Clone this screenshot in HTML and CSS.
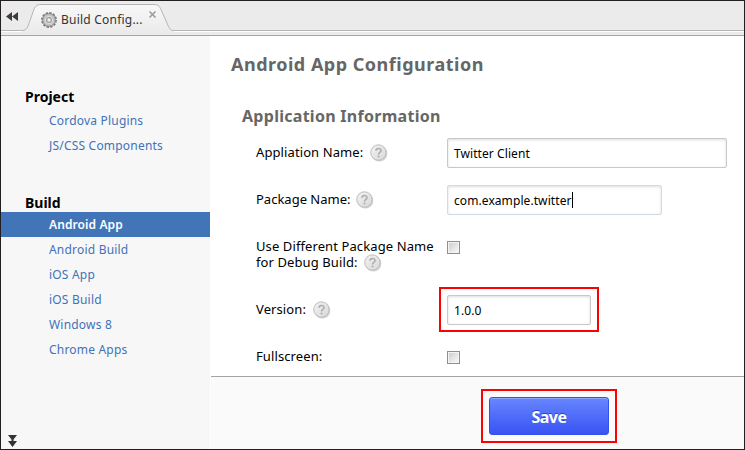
FILE: index.html
```html
<!DOCTYPE html>
<html lang="en">
<head>
<meta charset="utf-8">
<title>Android App Configuration</title>
<link rel="stylesheet" href="styles.css">
</head>
<body>
<svg class="defs" width="0" height="0" aria-hidden="true">
  <defs>
    <linearGradient id="disc" x1="0" y1="0" x2="1" y2="1"><stop offset="0" stop-color="#f3f3f3"/><stop offset="1" stop-color="#d8d8d8"/></linearGradient>
    <symbol id="help" viewBox="0 0 18 18">
      <circle cx="9.4" cy="9.7" r="7.9" fill="#d2d2d2"/>
      <circle cx="8.4" cy="8.5" r="7.7" fill="url(#disc)" stroke="#bdbdbd"/>
      <path d="M6 6.8C6 3.6 11.1 3.7 11 6.7C10.9 8.5 8.6 8.5 8.5 10.5" fill="none" stroke="#adadad" stroke-width="1.6"/>
      <circle cx="8.5" cy="12.6" r="1" fill="#adadad"/>
    </symbol>
  </defs>
</svg>
<div class="window">
  <header class="tabs">
    <svg class="tabbar" width="743" height="35" viewBox="1 1 743 35">
      <defs><linearGradient id="tab" x1="0" y1="0" x2="0" y2="1"><stop offset="0" stop-color="#f8f8f8"/><stop offset="1" stop-color="#ebebeb"/></linearGradient></defs>
      <path d="M1 31.5H744" stroke="#fff"/>
      <path d="M22 32V30.500C27 30.500 28 26 29.500 22L33 12C35 6.500 36 4.500 41 4.500H154C159 4.500 160 7 162 12L167 23C169 28 170 30.500 174 30.500V32Z" fill="url(#tab)"/>
      <path d="M1 30.500H22C27 30.500 28 26 29.500 22L33 12C35 6.500 36 4.500 41 4.500H154C159 4.500 160 7 162 12L167 23C169 28 170 30.500 174 30.500H744" fill="none" stroke="#b5b5b5"/>
      <path d="M12 12V21L6 16.500ZM18 12V21L12 16.500Z" fill="#3c3c3c"/>
      <g transform="translate(49 20)">
        <circle r="6.900" fill="none" stroke="#777" stroke-width="2" stroke-dasharray="2.400 1.213"/>
        <circle r="6.300" fill="#c6c6c6" stroke="#8b8b8b"/>
        <circle r="3.700" fill="#aaa" stroke="#dedede"/>
        <circle r="2.200" fill="#f0f0f0" stroke="#888" stroke-width=".7"/>
      </g>
      <path d="M149.500 11.500L155.500 17.500M155.500 11.500L149.500 17.500" stroke="#999" stroke-width="1.500"/>
    </svg>
    <span class="tab-title">Build Config...</span>
  </header>
  <div class="body">
    <nav class="sidebar">
      <h3>Project</h3>
      <ul><li>Cordova Plugins</li><li>JS/CSS Components</li></ul>
      <h3 class="build">Build</h3>
      <ul><li class="active">Android App</li><li>Android Build</li><li>iOS App</li><li>iOS Build</li><li>Windows 8</li><li>Chrome Apps</li></ul>
      <svg class="collapse" width="9" height="12" viewBox="0 0 9 12"><path d="M0 0H9L5.500 4.500V6H9L4.500 12L0 6H3.500V4.500Z" fill="#333"/></svg>
    </nav>
    <main class="main">
      <section class="form">
        <h1>Android App Configuration</h1>
        <h2>Application Information</h2>
        <div class="rows">
          <div class="row"><div class="label"><span>Appliation Name:</span><svg class="help"><use href="#help"/></svg></div><div class="input wide">Twitter Client</div></div>
          <div class="row"><div class="label package"><span>Package Name:</span><svg class="help"><use href="#help"/></svg></div><div class="input medium focus">com.example.twitter<i class="caret"></i></div></div>
          <div class="row double"><div class="label"><span>Use Different Package Name<br>for Debug Build:</span><svg class="help"><use href="#help"/></svg></div><div class="check"></div></div>
          <div class="row"><div class="label"><span>Version:</span><svg class="help"><use href="#help"/></svg></div><div class="mark"><div class="input short">1.0.0</div></div></div>
          <div class="row"><div class="label"><span>Fullscreen:</span></div><div class="check"></div></div>
        </div>
      </section>
      <footer class="footer"><div class="mark-save"><button class="save">Save</button></div></footer>
    </main>
  </div>
</div>
</body>
</html>
```
FILE: styles.css
```css
* { box-sizing: border-box; }
body { margin: 0; font: 12px/16px "Noto Sans", sans-serif; color: #000; }
h1, h2, h3, ul { margin: 0; padding: 0; }
.defs { position: absolute; }
.window { width: 745px; height: 450px; border: 1px solid #231f20; display: flex; flex-direction: column; overflow: hidden; background: #fff; }
.tabs { position: relative; height: 35px; flex: none; background: #ebebeb; border-bottom: 1px solid #a5a5a5; overflow: hidden; }
.tabbar { display: block; }
.tab-title { position: absolute; left: 60px; top: 11px; color: #333; white-space: nowrap; letter-spacing: .22px; }
.body { display: flex; flex: 1; min-height: 0; }
.sidebar { position: relative; width: 209px; flex: none; background: #f7f7f7; padding-top: 51px; }
.sidebar h3 { height: 21px; padding-left: 24px; font-size: 14px; line-height: 20px; font-weight: 700; letter-spacing: 0; }
.sidebar h3.build { margin-top: 35px; height: 19px; }
.sidebar ul { list-style: none; }
.sidebar li { height: 25px; padding-left: 48px; line-height: 25px; color: #4272b8; letter-spacing: .2px; }
.sidebar .active { background: #4175b7; color: #fff; font-weight: 600; letter-spacing: .1px; }
.collapse { position: absolute; left: 7px; bottom: 2px; }
.main { flex: 1; margin-left: 1px; display: flex; flex-direction: column; }
.form { height: 340px; flex: none; padding: 16px 0 0 20px; }
h1 { font-size: 18px; line-height: 24px; color: #666; white-space: nowrap; letter-spacing: .5px; }
h2 { margin: 28px 0 0 11px; font-size: 16px; line-height: 24px; color: #666; white-space: nowrap; letter-spacing: .28px; }
.rows { display: grid; gap: 17px; margin: 10px 0 0 25px; }
.row { display: flex; height: 30px; }
.row.double { height: 46px; }
.label { width: 191px; flex: none; padding-top: 6px; font-size: 13px; white-space: nowrap; letter-spacing: .1px; }
.label.package { letter-spacing: 0; }
.help { width: 18px; height: 18px; margin: 0 0 -5px 7px; }
.package .help { margin-left: 6px; }
.double .help { margin-left: 6px; }
.input { height: 30px; padding: 0 6px; border: 1px solid #c8c8c8; border-radius: 2px; box-shadow: inset 0 1px 3px #ddd; background: #fff; line-height: 29px; white-space: nowrap; letter-spacing: .08px; display: flex; align-items: center; }
.wide { width: 280px; }
.medium { width: 215px; }
.short { width: 144px; }
.focus { border-color: #d3d9e8; }
.caret { width: 1px; height: 16px; background: #000; }
.check { width: 13px; height: 13px; margin-top: 9px; border: 1px solid #8e8f8f; background: linear-gradient(135deg, #ccd0d5, #f6f6f6) center / 9px 9px no-repeat #f4f4f4; box-shadow: inset 0 0 0 1px #f4f4f4; }
.mark { height: 45px; width: 160px; margin: -8px 0 0 -8px; border: 2px solid #f00; padding: 6px; }
.footer { flex: 1; border-top: 1px solid #a5a5a5; background: #fafafa; padding: 12px 0 0 270px; }
.mark-save { width: 136px; height: 54px; border: 2px solid #f00; padding: 6px; }
.save { display: block; width: 120px; height: 38px; padding: 0; border: 1px solid #3651e8; border-radius: 3px; background: linear-gradient(#6786ff, #3853f4); box-shadow: inset 0 1px 0 #8da5ff; color: #fff; font: 700 16px/38px "Noto Sans", sans-serif; letter-spacing: -.5px; text-shadow: 0 -1px 0 #2845bf; }
```
